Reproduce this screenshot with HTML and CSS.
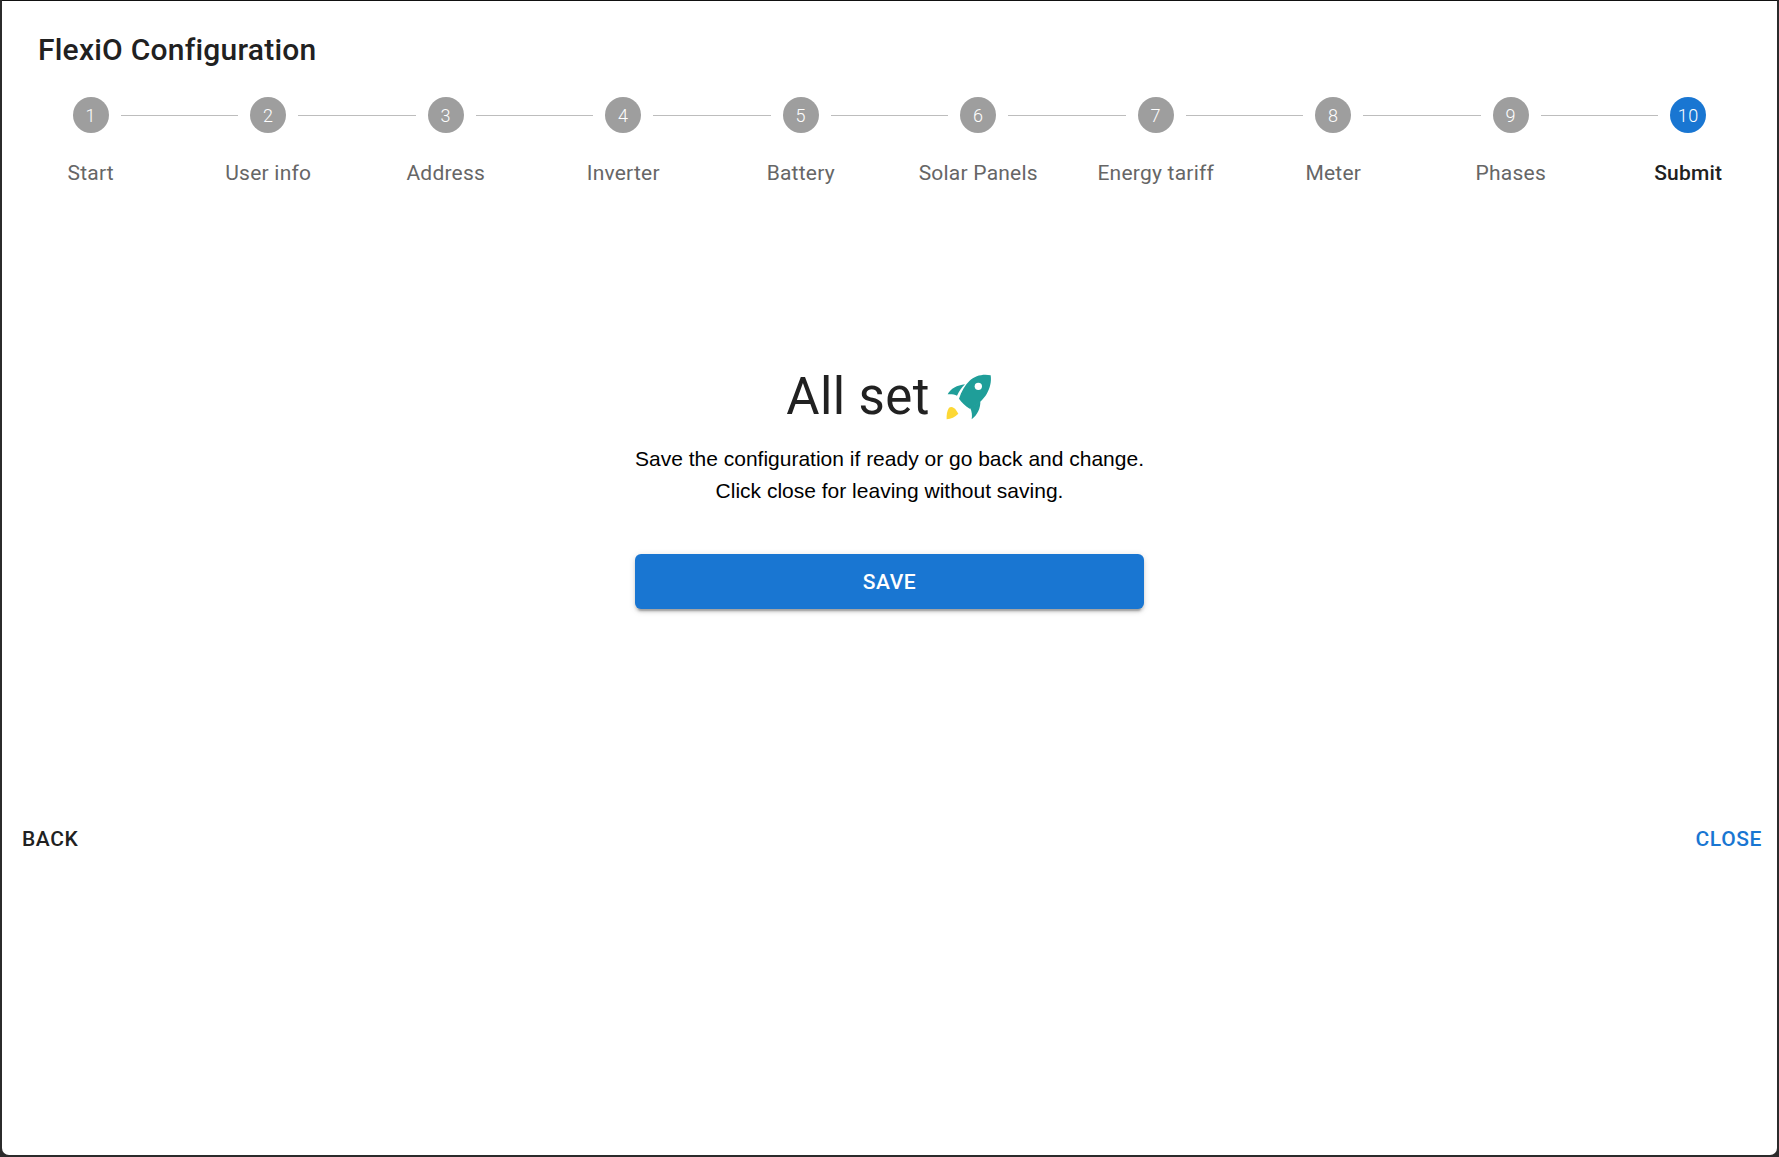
FILE: index.html
```html
<!DOCTYPE html>
<html lang="en">
<head>
<meta charset="utf-8">
<title>FlexiO Configuration</title>
<link rel="stylesheet" href="styles.css">
</head>
<body>
<div class="dialog">
  <h2 class="title">FlexiO Configuration</h2>
  <ol class="stepper">
    <li class="step"><span class="dot">1</span><span class="label">Start</span></li>
    <li class="step"><span class="dot">2</span><span class="label">User info</span></li>
    <li class="step"><span class="dot">3</span><span class="label">Address</span></li>
    <li class="step"><span class="dot">4</span><span class="label">Inverter</span></li>
    <li class="step"><span class="dot">5</span><span class="label">Battery</span></li>
    <li class="step"><span class="dot">6</span><span class="label">Solar Panels</span></li>
    <li class="step"><span class="dot">7</span><span class="label">Energy tariff</span></li>
    <li class="step"><span class="dot">8</span><span class="label">Meter</span></li>
    <li class="step"><span class="dot">9</span><span class="label">Phases</span></li>
    <li class="step active"><span class="dot">10</span><span class="label">Submit</span></li>
  </ol>
  <main class="panel">
    <h1 class="heading">All set
      <svg class="rocket" viewBox="30 20 144 144" aria-hidden="true">
        <path class="teal" d="M167 27C146 22 120 27 103 44C90 57 79 76 72 97C80 108 90 118 104 127C126 117 144 101 155 83C165 66 170 46 167 27Z"/>
        <path class="teal" d="M38 84C47 67 66 57 90 54C80 64 72 75 66 88C58 84 48 83 38 84Z"/>
        <path class="teal" d="M136 104C137 126 127 146 110 159C112 147 111 135 105 124C116 119 127 112 136 104Z"/>
        <path class="flame" d="M42 124C50 119 58 124 63 131L70 142C60 152 48 158 35 159C34 146 36 134 42 124Z"/>
        <circle class="hole" cx="130" cy="60" r="11"/>
      </svg>
    </h1>
    <p class="copy">Save the configuration if ready or go back and change.<br>Click close for leaving without saving.</p>
    <button class="save">SAVE</button>
  </main>
  <div class="actions">
    <button class="text-btn">BACK</button>
    <button class="text-btn primary">CLOSE</button>
  </div>
</div>
</body>
</html>
```
FILE: styles.css
```css
* { box-sizing: border-box; }
html, body { margin: 0; height: 100%; background: #2b2b2b; }
body { font-family: Roboto, sans-serif; overflow: hidden; }
.dialog {
  height: 1157px;
  margin: 0;
  background: #fff;
  border: solid #2b2b2b;
  border-width: 1px 2px 2px 2px;
  border-top-color: #111;
  border-radius: 2px 2px 9px 9px;
  display: flex;
  flex-direction: column;
}
.title {
  margin: 0;
  padding: 29px 36px 0;
  height: 96px;
  flex: none;
  font-size: 30px;
  line-height: 40px;
  font-weight: 500;
  letter-spacing: 0.225px;
  color: #212121;
}
.stepper {
  list-style: none;
  margin: 0;
  padding: 0;
  flex: none;
  display: grid;
  grid-template-columns: repeat(10, 1fr);
}
.step {
  position: relative;
  display: flex;
  flex-direction: column;
  align-items: center;
}
.step + .step::before {
  content: "";
  position: absolute;
  top: 18px;
  left: calc(-50% + 30px);
  right: calc(50% + 30px);
  border-top: 1px solid #bdbdbd;
}
.dot {
  width: 36px;
  height: 36px;
  border-radius: 50%;
  background: #9e9e9e;
  color: #fff;
  font-size: 18px;
  font-weight: 300;
  letter-spacing: 0.4px;
  display: flex;
  align-items: center;
  justify-content: center;
}
.active .dot { background: #1976d2; }
.label {
  margin-top: 25px;
  font-size: 21px;
  line-height: 30px;
  letter-spacing: 0.225px;
  color: #666;
}
.active .label { font-weight: 500; color: #212121; }
.panel {
  flex: none;
  height: 636px;
  padding-top: 176px;
  display: flex;
  flex-direction: column;
  align-items: center;
}
.heading {
  margin: 0;
  display: flex;
  align-items: center;
  gap: 15px;
  height: 66px;
  font-size: 51px;
  line-height: 66px;
  font-weight: 400;
  letter-spacing: 0.375px;
  color: #212121;
}
.rocket { width: 48px; height: 48px; flex: none; }
.teal { fill: #1f9e99; }
.flame { fill: #fdd835; }
.hole { fill: #fff; }
.copy {
  margin: 13px 0 0;
  font-family: "Liberation Sans", Arial, sans-serif;
  font-size: 21px;
  line-height: 32px;
  text-align: center;
  color: #000;
}
.save {
  margin-top: 47px;
  width: 509px;
  height: 55px;
  border: 0;
  border-radius: 6px;
  background: #1976d2;
  color: #fff;
  font: 500 21px Roboto, sans-serif;
  letter-spacing: 0.6px;
  box-shadow: 0 4.5px 1.5px -3px rgba(0,0,0,.2), 0 3px 3px 0 rgba(0,0,0,.14), 0 1.5px 7.5px 0 rgba(0,0,0,.12);
}
.actions {
  flex: none;
  display: flex;
  justify-content: space-between;
  padding: 0 15px 0 20px;
}
.text-btn {
  border: 0;
  padding: 0;
  background: none;
  font: 500 21px/30px Roboto, sans-serif;
  letter-spacing: 0.6px;
  color: #212121;
}
.primary { color: #1976d2; }
```
